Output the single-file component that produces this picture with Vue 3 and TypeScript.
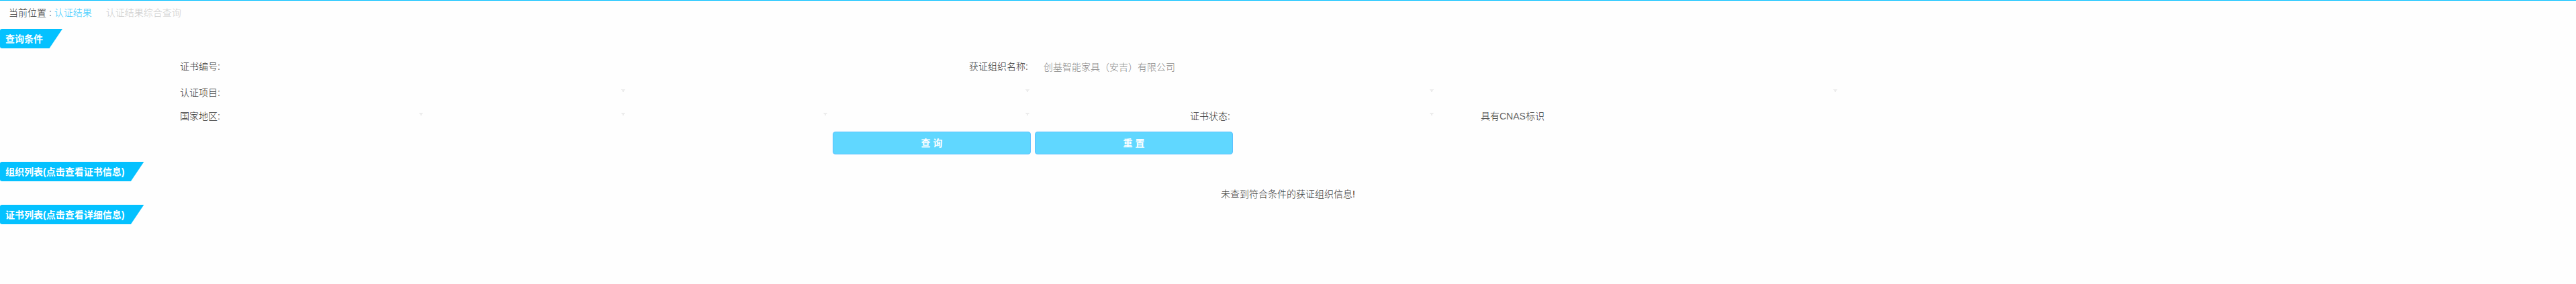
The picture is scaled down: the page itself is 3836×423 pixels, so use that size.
<script setup lang="ts">
const emptyMessage: string = '未查到符合条件的获证组织信息!'
const organization: string = '创基智能家具（安吉）有限公司'
const projectSelects: number = 4
const regionSelects: number = 4
</script>

<template>
  <div class="page">
    <nav class="crumb">
      <span>当前位置<span class="thin"> :&nbsp;</span></span><a class="link">认证结果</a><span class="current">认证结果综合查询</span>
    </nav>
    <h2 class="ribbon">查询条件</h2>
    <form class="form">
      <div class="row one">
        <label class="c1">证书编号<span class="thin">:</span></label>
        <label class="c2">获证组织名称<span class="thin">:</span></label>
        <span class="value">{{ organization }}</span>
      </div>
      <div class="row two">
        <label class="c1">认证项目<span class="thin">:</span></label>
        <span v-for="n in projectSelects" :key="n" class="select double"><i /></span>
      </div>
      <div class="row three">
        <label class="c1">国家地区<span class="thin">:</span></label>
        <span v-for="n in regionSelects" :key="n" class="select"><i /></span>
        <label class="c4">证书状态<span class="thin">:</span></label>
        <span class="select"><i /></span>
        <span class="cnas">具有<span class="thin">CNAS</span>标识</span>
      </div>
      <div class="buttons">
        <button type="button">查 询</button>
        <button type="button">重 置</button>
      </div>
    </form>
    <h2 class="ribbon">组织列表(点击查看证书信息)</h2>
    <p class="empty">{{ emptyMessage }}</p>
    <h2 class="ribbon">证书列表(点击查看详细信息)</h2>
  </div>
</template>

<style>
body {
  background: #fefefe;
}
</style>

<style scoped>
.page {
  box-sizing: border-box;
  height: 423px;
  overflow: hidden;
  border-top: 1px solid #00bfff;
  background: #fefefe;
  color: #333;
  font: 300 14px/20px "Liberation Sans", "Noto Sans CJK SC", sans-serif;
}
.thin {
  color: #666;
}
.crumb {
  display: flex;
  box-sizing: border-box;
  height: 42px;
  padding: 8px 0 0 13px;
}
.link {
  color: #38cbff;
}
.current {
  margin-left: 21px;
  color: #ccc;
}
.ribbon {
  width: max-content;
  height: 29px;
  margin: 0;
  padding: 0 29px 0 8px;
  border-radius: 3px 0 0 3px;
  background: #04c1ff;
  clip-path: polygon(0 0, 100% 0, calc(100% - 19.5px) 100%, 0 100%);
  color: #fff;
  font-size: 14px;
  font-weight: 700;
  line-height: 30px;
}
.form {
  height: 169px;
  padding-top: 17px;
  box-sizing: border-box;
}
.row {
  display: flex;
  height: 39px;
}
.row > * {
  flex-shrink: 0;
}
.two {
  height: 35px;
}
.three {
  height: 33px;
}
.c1 {
  width: 328px;
  text-align: right;
}
.c2 {
  width: 1203px;
  text-align: right;
}
.value {
  margin: 1px 0 0 23px;
  color: #888;
}
.select {
  display: flex;
  justify-content: flex-end;
  box-sizing: border-box;
  width: 301px;
  padding-top: 5px;
}
.select i {
  width: 6px;
  height: 4px;
  background: #ececec;
  clip-path: polygon(0 0, 6px 0, 6px 1px, 5px 1px, 5px 2px, 4px 2px, 4px 4px, 2px 4px, 2px 2px, 1px 2px, 1px 1px, 0 1px);
}
.c1 + .select {
  width: 302px;
}
.two .double {
  width: 602px;
}
.two .c1 + .double {
  width: 603px;
}
.two .double:last-child {
  width: 601px;
}
.c4 {
  width: 299px;
  text-align: right;
}
.c4 + .select {
  width: 303px;
}
.cnas {
  margin-left: 70px;
}
.buttons {
  display: flex;
  gap: 6px;
  padding-left: 1240px;
}
button {
  box-sizing: border-box;
  width: 295px;
  height: 34px;
  padding: 0;
  border: 1px solid #5bc0ff;
  border-radius: 4px;
  background: #60d7ff;
  color: #fff;
  font: 700 14px/32px "Liberation Sans", "Noto Sans CJK SC", sans-serif;
}
.empty {
  box-sizing: border-box;
  height: 35px;
  margin: 0;
  padding-top: 9px;
  text-align: center;
}
</style>
